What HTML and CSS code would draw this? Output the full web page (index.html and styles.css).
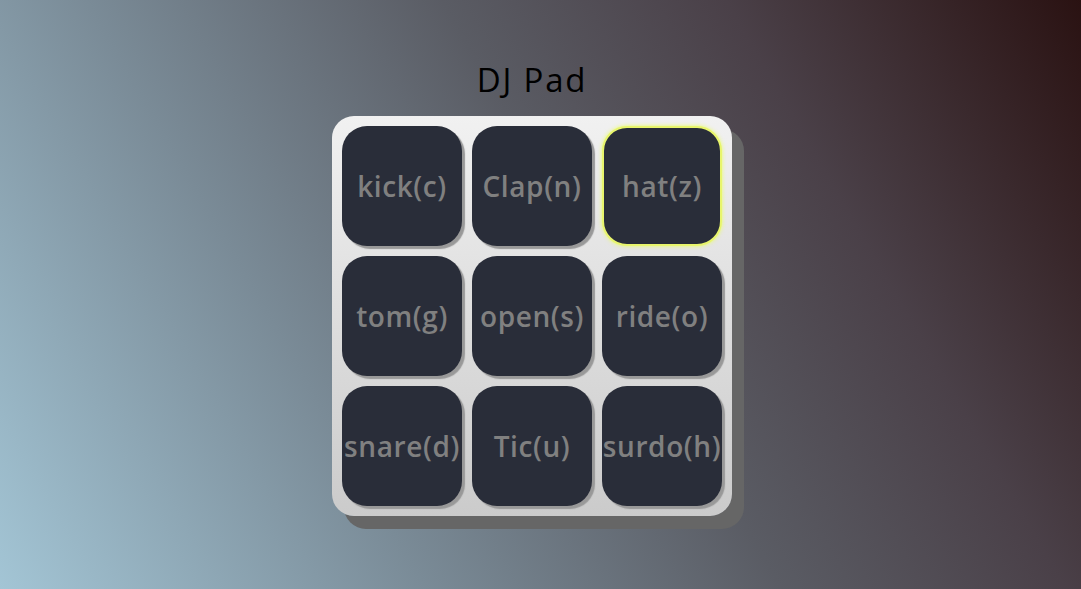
FILE: index.html
```html
<!DOCTYPE html>
<html>
<head>
<meta charset="utf-8">
<link rel="stylesheet" href="styles.css">
</head>
<body>
<main class="page">
  <h1 class="title">DJ Pad</h1>
  <div class="board">
    <div class="pad">kick(c)</div>
    <div class="pad">Clap(n)</div>
    <div class="pad active">hat(z)</div>
    <div class="pad">tom(g)</div>
    <div class="pad">open(s)</div>
    <div class="pad">ride(o)</div>
    <div class="pad">snare(d)</div>
    <div class="pad">Tic(u)</div>
    <div class="pad">surdo(h)</div>
  </div>
</main>
</body>
</html>
```
FILE: styles.css
```css
html, body {
  margin: 0;
  height: 100%;
}
body {
  background: linear-gradient(60deg, #a3c5d5 0%, #7a8b97 30%, #5a5c64 55%, #4a4048 75%, #2a1212 100%);
  font-family: "Open Sans", "Noto Sans", sans-serif;
  overflow: hidden;
}
.page {
  display: flex;
  flex-direction: column;
  align-items: center;
  padding-right: 17px;
}
.title {
  margin: 62px 0 0;
  height: 54px;
  font-size: 33px;
  font-weight: 400;
  color: #000;
  line-height: 36px;
  letter-spacing: 1.8px;
}
.board {
  width: 380px;
  height: 380px;
  padding: 10px;
  display: grid;
  grid-template-columns: repeat(3, 120px);
  grid-template-rows: repeat(3, 120px);
  gap: 10px;
  border-radius: 22px;
  background: linear-gradient(to bottom, #f1f1f1, #cbcbcb);
  box-shadow: 12px 13px 0 #666666;
}
.pad {
  display: flex;
  align-items: center;
  justify-content: center;
  background: #292d39;
  border-radius: 25px;
  box-shadow: 3px 3px 1px #999;
  color: #808080;
  font-size: 28px;
  font-weight: 600;
  white-space: nowrap;
  letter-spacing: 0.6px;
}
.pad.active {
  box-sizing: border-box;
  border: 2px solid #e8f56c;
  box-shadow: 0 0 4px #eaff60;
}
```
